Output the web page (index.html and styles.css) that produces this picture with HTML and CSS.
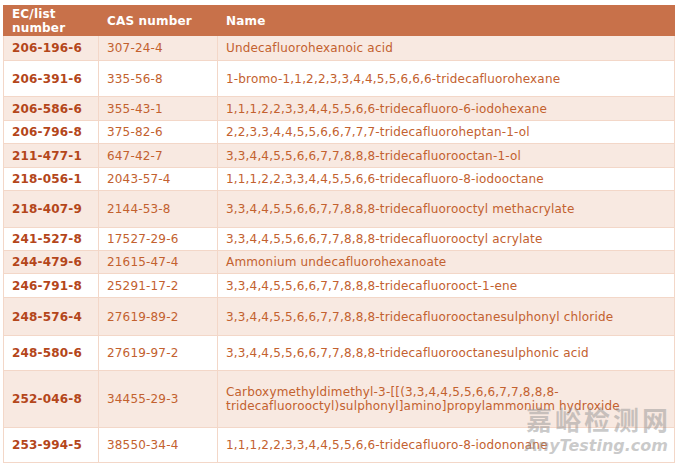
FILE: index.html
```html
<!DOCTYPE html>
<html>
<head>
<meta charset="utf-8">
<link rel="stylesheet" href="styles.css">
</head>
<body>
<div class="page">
<table class="sub">
  <colgroup><col class="c1"><col class="c2"><col class="c3"></colgroup>
  <thead>
    <tr class="hd"><th>EC/list<br>number</th><th>CAS number</th><th>Name</th></tr>
  </thead>
  <tbody>
    <tr class="alt r25"><td class="ec">206-196-6</td><td>307-24-4</td><td>Undecafluorohexanoic acid</td></tr>
    <tr class="r36"><td class="ec">206-391-6</td><td>335-56-8</td><td>1-bromo-1,1,2,2,3,3,4,4,5,5,6,6,6-tridecafluorohexane</td></tr>
    <tr class="alt r24"><td class="ec">206-586-6</td><td>355-43-1</td><td>1,1,1,2,2,3,3,4,4,5,5,6,6-tridecafluoro-6-iodohexane</td></tr>
    <tr class="r23"><td class="ec">206-796-8</td><td>375-82-6</td><td>2,2,3,3,4,4,5,5,6,6,7,7,7-tridecafluoroheptan-1-ol</td></tr>
    <tr class="alt r24"><td class="ec">211-477-1</td><td>647-42-7</td><td>3,3,4,4,5,5,6,6,7,7,8,8,8-tridecafluorooctan-1-ol</td></tr>
    <tr class="r23"><td class="ec">218-056-1</td><td>2043-57-4</td><td>1,1,1,2,2,3,3,4,4,5,5,6,6-tridecafluoro-8-iodooctane</td></tr>
    <tr class="alt r37"><td class="ec">218-407-9</td><td>2144-53-8</td><td>3,3,4,4,5,5,6,6,7,7,8,8,8-tridecafluorooctyl methacrylate</td></tr>
    <tr class="r23"><td class="ec">241-527-8</td><td>17527-29-6</td><td>3,3,4,4,5,5,6,6,7,7,8,8,8-tridecafluorooctyl acrylate</td></tr>
    <tr class="alt r23"><td class="ec">244-479-6</td><td>21615-47-4</td><td>Ammonium undecafluorohexanoate</td></tr>
    <tr class="r24"><td class="ec">246-791-8</td><td>25291-17-2</td><td>3,3,4,4,5,5,6,6,7,7,8,8,8-tridecafluorooct-1-ene</td></tr>
    <tr class="alt r38"><td class="ec">248-576-4</td><td>27619-89-2</td><td>3,3,4,4,5,5,6,6,7,7,8,8,8-tridecafluorooctanesulphonyl chloride</td></tr>
    <tr class="r35"><td class="ec">248-580-6</td><td>27619-97-2</td><td>3,3,4,4,5,5,6,6,7,7,8,8,8-tridecafluorooctanesulphonic acid</td></tr>
    <tr class="alt r57"><td class="ec">252-046-8</td><td>34455-29-3</td><td>Carboxymethyldimethyl-3-[[(3,3,4,4,5,5,6,6,7,7,8,8,8-<br>tridecafluorooctyl)sulphonyl]amino]propylammonium hydroxide</td></tr>
    <tr class="r35"><td class="ec">253-994-5</td><td>38550-34-4</td><td>1,1,1,2,2,3,3,4,4,5,5,6,6-tridecafluoro-8-iodononane</td></tr>
  </tbody>
</table>
<div class="wm">
  <div class="wm-cn">嘉峪检测网</div>
  <div class="wm-en">AnyTesting.com</div>
</div>
</div>
</body>
</html>
```
FILE: styles.css
```css
html, body {
  margin: 0;
  padding: 0;
  background: #ffffff;
}
.page {
  position: relative;
  width: 680px;
  height: 465px;
  overflow: hidden;
  padding: 5px 0 0 3px;
  box-sizing: border-box;
}
.sub {
  border-collapse: collapse;
  table-layout: fixed;
  width: 671px;
  font-family: "DejaVu Sans", Verdana, sans-serif;
  font-size: 12px;
  line-height: 14px;
  letter-spacing: 0.17px;
  color: #c3612f;
}
.c1 { width: 95px; }
.c2 { width: 119px; }
.c3 { width: 457px; }
.sub th {
  background: #c8714a;
  color: #ffffff;
  font-weight: bold;
  text-align: left;
  vertical-align: middle;
  padding: 1px 8px 0 8px;
  height: 30px;
  border: 1px solid #c8714a;
  box-sizing: border-box;
}
.sub td {
  padding: 0 8px;
  vertical-align: middle;
  border: 1px solid #f3d7c8;
  white-space: nowrap;
}
.sub td.ec {
  font-weight: bold;
  color: #b4461a;
}
.alt td { background: #f8e9e1; }
.r23 td { height: 22px; }
.r24 td { height: 23px; }
.r25 td { height: 24px; }
.r35 td { height: 34px; }
.r36 td { height: 35px; }
.r37 td { height: 36px; }
.r38 td { height: 37px; }
.r57 td { height: 56px; }
.wm {
  position: absolute;
  right: 12px;
  top: 403px;
  white-space: nowrap;
  text-align: right;
  color: rgba(150, 150, 150, 0.5);
  pointer-events: none;
}
.wm-cn {
  font-family: "Noto Sans CJK SC", sans-serif;
  font-size: 26px;
  line-height: 32px;
  font-weight: bold;
  letter-spacing: 3px;
  margin-right: -3px;
}
.wm-en {
  font-family: "DejaVu Sans", sans-serif;
  font-size: 16px;
  line-height: 18px;
  font-style: italic;
  font-weight: bold;
  letter-spacing: 0;
  margin-top: 2px;
}
```
